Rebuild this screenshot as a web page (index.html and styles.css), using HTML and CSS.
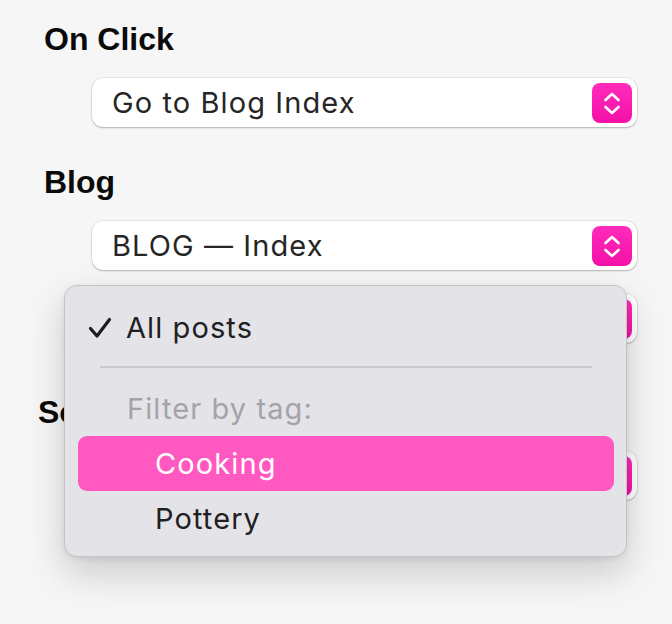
FILE: index.html
```html
<!DOCTYPE html>
<html lang="en">
<head>
<meta charset="utf-8">
<title>Link settings</title>
<link rel="stylesheet" href="styles.css">
</head>
<body>
<div class="panel">
  <section class="group">
    <h2 class="label">On Click</h2>
    <div class="select">
      <span class="select-text">Go to Blog Index</span>
      <span class="stepper"><svg viewBox="0 0 40 40" width="40" height="40"><path d="M13.5 17 L20 11 L26.5 17 M13.5 24 L20 30 L26.5 24" fill="none" stroke="#fff" stroke-width="2.6" stroke-linecap="round" stroke-linejoin="round"/></svg></span>
    </div>
  </section>
  <section class="group group-blog">
    <h2 class="label">Blog</h2>
    <div class="select">
      <span class="select-text">BLOG — Index</span>
      <span class="stepper"><svg viewBox="0 0 40 40" width="40" height="40"><path d="M13.5 17 L20 11 L26.5 17 M13.5 24 L20 30 L26.5 24" fill="none" stroke="#fff" stroke-width="2.6" stroke-linecap="round" stroke-linejoin="round"/></svg></span>
    </div>
    <div class="select select-second">
      <span class="select-text"></span>
      <span class="stepper"><svg viewBox="0 0 40 40" width="40" height="40"><path d="M13.5 17 L20 11 L26.5 17 M13.5 24 L20 30 L26.5 24" fill="none" stroke="#fff" stroke-width="2.6" stroke-linecap="round" stroke-linejoin="round"/></svg></span>
    </div>
  </section>
  <section class="group group-sort">
    <h2 class="label label-sort">Sort</h2>
    <div class="select">
      <span class="select-text"></span>
      <span class="stepper"><svg viewBox="0 0 40 40" width="40" height="40"><path d="M13.5 17 L20 11 L26.5 17 M13.5 24 L20 30 L26.5 24" fill="none" stroke="#fff" stroke-width="2.6" stroke-linecap="round" stroke-linejoin="round"/></svg></span>
    </div>
  </section>

  <div class="menu" role="listbox">
    <div class="menu-item checked"><svg class="check" viewBox="0 0 24 22" width="24" height="22"><path d="M2.5 11.5 L9 19 L21.5 2.5" fill="none" stroke="#1d1d1f" stroke-width="3.2" stroke-linecap="round" stroke-linejoin="round"/></svg>All posts</div>
    <div class="menu-sep"></div>
    <div class="menu-item heading">Filter by tag:</div>
    <div class="menu-item indent active">Cooking</div>
    <div class="menu-item indent">Pottery</div>
  </div>
</div>
</body>
</html>
```

FILE: styles.css
```css
html, body {
  margin: 0;
  padding: 0;
  background: #f6f6f6;
}

body {
  font-family: "Inter", "Liberation Sans", sans-serif;
  color: #262626;
  width: 672px;
  height: 624px;
  overflow: hidden;
}

.panel {
  position: relative;
  padding: 20px 35px 0 44px;
}

.group {
  display: flex;
  flex-direction: column;
}

.group-blog {
  margin-top: 36px;
}

.group-sort {
  margin-top: 50px;
}

.label {
  margin: 0;
  font-family: "Liberation Sans", sans-serif;
  font-weight: 700;
  font-size: 32px;
  line-height: 38px;
  color: #0a0a0a;
}

.label-sort {
  margin-left: -6px;
}

.select {
  margin: 20px 0 0 48px;
  height: 49px;
  box-sizing: border-box;
  background: #fff;
  border-radius: 11px;
  box-shadow: 0 0 0 0.5px rgba(0, 0, 0, 0.12), 0 1px 2px rgba(0, 0, 0, 0.22);
  display: flex;
  align-items: center;
  justify-content: space-between;
  padding: 0 5px 0 20px;
}

.select-second {
  margin-top: 24px;
}

.select-text {
  font-size: 29px;
  letter-spacing: 1.1px;
  line-height: 34px;
  color: #262626;
}

.stepper {
  width: 40px;
  height: 40px;
  border-radius: 8px;
  background: linear-gradient(#ff2cbb, #f410a8);
  display: flex;
}

.menu {
  position: absolute;
  left: 64px;
  top: 285px;
  width: 563px;
  height: 272px;
  box-sizing: border-box;
  padding: 14px 12px 12px 13px;
  background: #e4e3e8;
  border: 1px solid #c4c4c6;
  border-radius: 13px;
  box-shadow: 0 16px 38px rgba(0, 0, 0, 0.18), 0 2px 6px rgba(0, 0, 0, 0.08);
}

.menu-item {
  height: 55px;
  display: flex;
  align-items: center;
  padding-left: 49px;
  font-size: 29px;
  letter-spacing: 1.1px;
  color: #202020;
  border-radius: 9px;
}

.menu-item.checked {
  padding-left: 10px;
}

.check {
  margin-right: 14px;
  flex: none;
}

.menu-sep {
  height: 2px;
  margin: 11px 22px 13px 22px;
  background: #c9c8cd;
}

.menu-item.heading {
  color: #a3a3a8;
}

.menu-item.indent {
  padding-left: 77px;
}

.menu-item.active {
  background: #ff58c0;
  color: #fff;
}
```
